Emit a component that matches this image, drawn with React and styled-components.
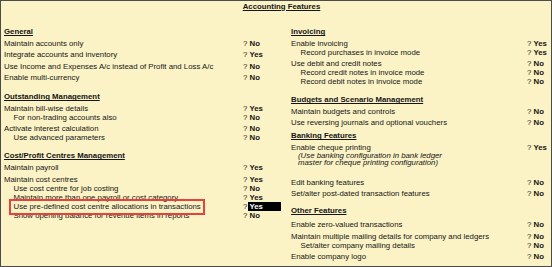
import React from 'react'
import styled, { createGlobalStyle } from 'styled-components'

const GlobalStyle = createGlobalStyle`
  html, body {
    margin: 0;
    padding: 0;
    background: #fbf3c5;
  }
  body {
    font-family: "Liberation Sans", Arial, sans-serif;
    font-size: 7.8px;
    color: #151515;
  }
`

const left = [
	{ kind: 'head', text: 'General' },
	{ text: 'Maintain accounts only', value: 'No' },
	{ text: 'Integrate accounts and inventory', value: 'Yes' },
	{ text: 'Use Income and Expenses A/c instead of Profit and Loss A/c', value: 'No' },
	{ text: 'Enable multi-currency', value: 'No' },
	{ kind: 'head', text: 'Outstanding Management', mt: 10 },
	{ text: 'Maintain bill-wise details', value: 'Yes' },
	{ kind: 'sub', text: 'For non-trading accounts also', value: 'No' },
	{ text: 'Activate interest calculation', value: 'No' },
	{ kind: 'sub', text: 'Use advanced parameters', value: 'No' },
	{ kind: 'head', text: 'Cost/Profit Centres Management', mt: 9 },
	{ text: 'Maintain payroll', value: 'Yes' },
	{ text: 'Maintain cost centres', value: 'Yes', mt: 3.5 },
	{ kind: 'sub', text: 'Use cost centre for job costing', value: 'No' },
	{ kind: 'sub', text: 'Maintain more than one payroll or cost category', value: 'Yes' },
	{ kind: 'sub', text: 'Use pre-defined cost centre allocations in transactions', value: 'Yes', marked: true, active: true },
	{ kind: 'sub', text: 'Show opening balance for revenue items in reports', value: 'No' },
]

const right = [
	{ kind: 'head', text: 'Invoicing' },
	{ text: 'Enable invoicing', value: 'Yes' },
	{ kind: 'sub', text: 'Record purchases in invoice mode', value: 'Yes' },
	{ text: 'Use debit and credit notes', value: 'No' },
	{ kind: 'sub', text: 'Record credit notes in invoice mode', value: 'No' },
	{ kind: 'sub', text: 'Record debit notes in invoice mode', value: 'No' },
	{ kind: 'head', text: 'Budgets and Scenario Management', mt: 9 },
	{ text: 'Maintain budgets and controls', value: 'No' },
	{ text: 'Use reversing journals and optional vouchers', value: 'No' },
	{ kind: 'head', text: 'Banking Features', mt: 4 },
	{ text: 'Enable cheque printing', value: 'Yes' },
	{ kind: 'note', lines: ['(Use banking configuration in bank ledger', 'master for cheque printing configuration)'] },
	{ text: 'Edit banking features', value: 'No', mt: 11 },
	{ text: 'Set/alter post-dated transaction features', value: 'No' },
	{ kind: 'head', text: 'Other Features', mt: 8 },
	{ text: 'Enable zero-valued transactions', value: 'No', mt: 5 },
	{ text: 'Maintain multiple mailing details for company and ledgers', value: 'No' },
	{ kind: 'sub', text: 'Set/alter company mailing details', value: 'No' },
	{ text: 'Enable company logo', value: 'No' },
]

const Item = ({ item, answerWidth }) => {
	if (item.kind === 'head') {
		return <Heading $mt={item.mt}>{item.text}</Heading>
	}
	if (item.kind === 'note') {
		return (
			<Note>
				{item.lines.map(line => <div key={line}>{line}</div>)}
			</Note>
		)
	}
	const sub = item.kind === 'sub'
	return (
		<Row $sub={sub} $mt={item.mt} $answer={answerWidth}>
			<Label $sub={sub}>
				{item.marked ? <Marked>{item.text}</Marked> : item.text}
			</Label>
			<Answer>
				<Q>?</Q>
				<Value $active={item.active}>{item.value}</Value>
			</Answer>
		</Row>
	)
}

const App = () => (
	<>
		<GlobalStyle />
		<Frame>
			<Title><span>Accounting Features</span></Title>
			<Columns>
				<LeftCol>
					{left.map(item => <Item key={item.text} item={item} answerWidth={38} />)}
				</LeftCol>
				<RightCol>
					{right.map(item => <Item key={item.text || 'note'} item={item} answerWidth={24} />)}
				</RightCol>
			</Columns>
		</Frame>
	</>
)

const Frame = styled.div`
    width: 552px;
    height: 267px;
    box-sizing: border-box;
    border: 1px solid #4b4b4b;
    background: #fbf3c5;
    overflow: hidden;
`

const Title = styled.div`
    display: flex;
    justify-content: center;
    padding: 0.5px 0 0 11px;
    line-height: 9px;
    font-weight: bold;
    text-decoration: underline;
`

const Columns = styled.div`
    display: grid;
    grid-template-columns: 280px 1fr;
    margin-top: 16.7px;
`

const LeftCol = styled.div`
    padding: 0 0 0 3px;
`

const RightCol = styled.div`
    padding: 0 0 0 10px;
`

const Heading = styled.div`
    line-height: 9px;
    font-weight: bold;
    text-decoration: underline;
    margin-top: ${p => p.$mt || 0}px;
`

const Row = styled.div`
    display: grid;
    grid-template-columns: 1fr ${p => p.$answer}px;
    line-height: 9px;
    white-space: nowrap;
    margin-top: ${p => (p.$mt !== undefined ? p.$mt : p.$sub ? 0 : 2.5)}px;
`

const Label = styled.div`
    padding-left: ${p => (p.$sub ? 9.5 : 0)}px;
`

const Marked = styled.span`
    position: relative;

    &::after {
        content: '';
        position: absolute;
        top: -3.5px;
        bottom: -3.5px;
        left: -4.5px;
        right: -4px;
        border: 2px solid #e8403a;
    }
`

const Answer = styled.div`
    display: flex;
`

const Q = styled.span`
    width: 5px;
    flex: none;
`

const Value = styled.span`
    flex: 1;
    padding-left: 1.5px;
    font-weight: bold;
    background: ${p => (p.$active ? '#000' : 'transparent')};
    color: ${p => (p.$active ? '#fff' : 'inherit')};
`

const Note = styled.div`
    padding-left: 7px;
    font-style: italic;
    line-height: 7.5px;
`

export default App
